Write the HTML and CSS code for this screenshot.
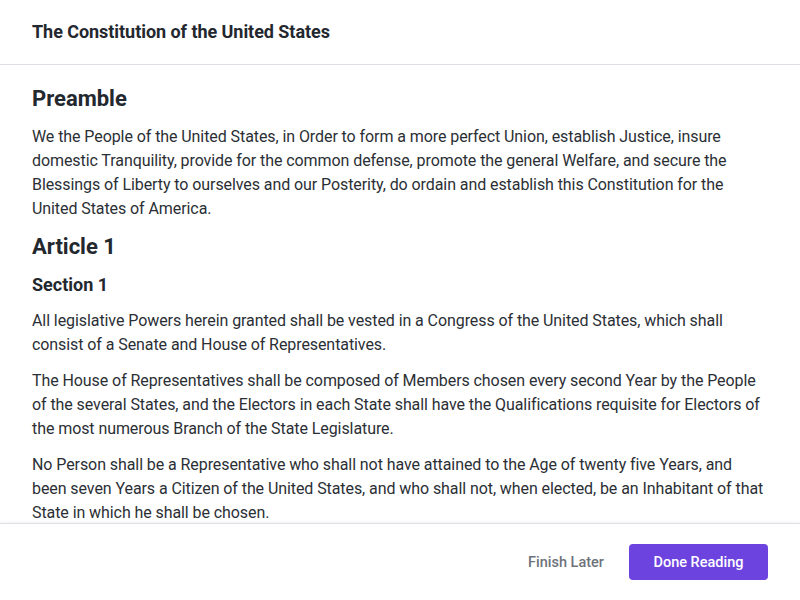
FILE: index.html
```html
<!DOCTYPE html>
<html lang="en">
<head>
<meta charset="utf-8">
<title>The Constitution of the United States</title>
<link rel="stylesheet" href="styles.css">
</head>
<body>
<div class="modal">
  <header class="modal-header">
    <h1 class="modal-title">The Constitution of the United States</h1>
  </header>
  <main class="modal-body">
    <h2 class="heading">Preamble</h2>
    <p class="text">We the People of the United States, in Order to form a more perfect Union, establish Justice, insure domestic Tranquility, provide for the common defense, promote the general Welfare, and secure the Blessings of Liberty to ourselves and our Posterity, do ordain and establish this Constitution for the United States of America.</p>
    <h2 class="heading">Article 1</h2>
    <h3 class="subheading">Section 1</h3>
    <p class="text">All legislative Powers herein granted shall be vested in a Congress of the United States, which shall consist of a Senate and House of Representatives.</p>
    <p class="text">The House of Representatives shall be composed of Members chosen every second Year by the People of the several States, and the Electors in each State shall have the Qualifications requisite for Electors of the most numerous Branch of the State Legislature.</p>
    <p class="text">No Person shall be a Representative who shall not have attained to the Age of twenty five Years, and been seven Years a Citizen of the United States, and who shall not, when elected, be an Inhabitant of that State in which he shall be chosen.</p>
  </main>
  <footer class="modal-footer">
    <button class="btn btn-link">Finish Later</button>
    <button class="btn btn-primary">Done Reading</button>
  </footer>
</div>
</body>
</html>
```

FILE: styles.css
```css
* { box-sizing: border-box; }
html, body { margin: 0; padding: 0; height: 100%; }
body {
  font-family: Roboto, "Noto Sans", sans-serif;
  color: #23272e;
  background: #fff;
}
.modal {
  display: flex;
  flex-direction: column;
  height: 600px;
  width: 800px;
}
.modal-header {
  height: 65px;
  flex: 0 0 65px;
  border-bottom: 1px solid #dcdfe4;
  padding: 0 32px;
  display: flex;
  align-items: center;
}
.modal-title {
  margin: 0;
  font-size: 18px;
  font-weight: 700;
  line-height: 24px;
  letter-spacing: -0.05px;
}
.modal-body {
  flex: 1 1 auto;
  overflow: hidden;
  padding: 20px 32px 0 32px;
}
.heading {
  font-size: 22px;
  font-weight: 700;
  line-height: 28px;
  margin: 0 0 12px;
}
.subheading {
  font-size: 18px;
  font-weight: 700;
  line-height: 24px;
  margin: 0 0 12px;
}
.text {
  font-size: 16px;
  line-height: 24px;
  margin: 0 0 12px;
  letter-spacing: -0.08px;
  color: #2b2f35;
}
.modal-footer {
  flex: 0 0 77px;
  border-top: 1px solid #dcdfe4;
  box-shadow: 0 -1px 3px rgba(0, 0, 0, 0.06);
  display: flex;
  justify-content: flex-end;
  align-items: center;
  gap: 9px;
  padding: 0 32px;
  position: relative;
}
.btn {
  font-family: Roboto, "Noto Sans", sans-serif;
  font-size: 14.5px;
  font-weight: 500;
  height: 36px;
  border-radius: 4px;
  border: none;
  cursor: pointer;
  padding: 0 16px;
  white-space: nowrap;
}
.btn-link {
  background: transparent;
  color: #6e737b;
}
.btn-primary {
  background: #6c43df;
  color: #fff;
  width: 139px;
  padding: 0;
  text-align: center;
}
```
